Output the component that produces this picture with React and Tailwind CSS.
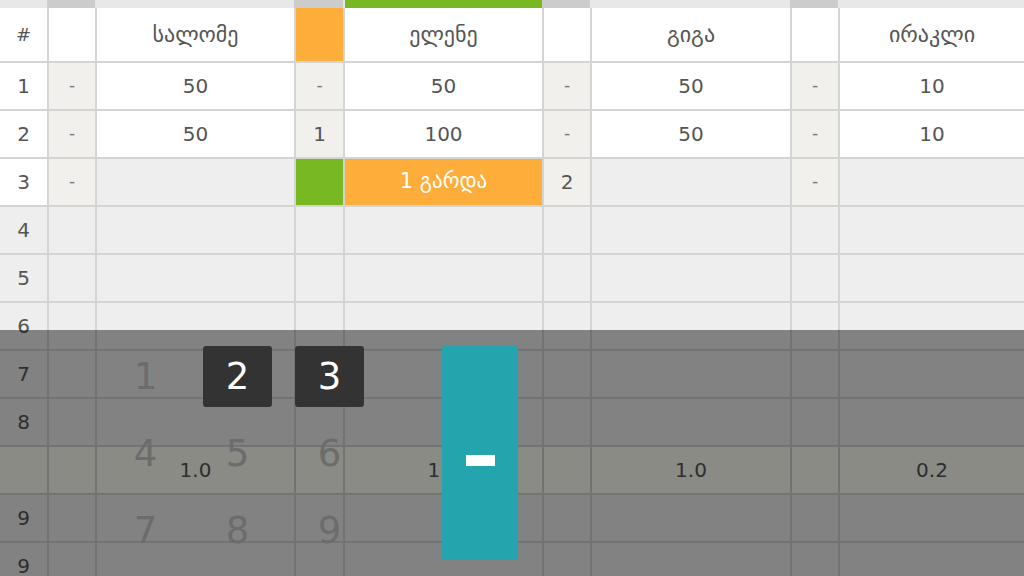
import React from "react";

const COLS = "grid grid-cols-[47px_46px_197px_47px_197px_46px_198px_46px_184px] gap-x-[2px]";

const WHITE = "bg-white";
const BEIGE = "bg-[#f2f0ec]";
const GREY = "bg-[#eeeeee]";
const SUM = "bg-[#fcfff2]";

// Cell: [text, background, extra text class]
const players = ["სალომე", "ელენე", "გიგა", "ირაკლი"];

const rows = [
  [
    ["1", WHITE], ["-", BEIGE, "dash"], ["50", WHITE], ["-", BEIGE, "dash"], ["50", WHITE],
    ["-", BEIGE, "dash"], ["50", WHITE], ["-", BEIGE, "dash"], ["10", WHITE],
  ],
  [
    ["2", WHITE], ["-", BEIGE, "dash"], ["50", WHITE], ["1", BEIGE], ["100", WHITE],
    ["-", BEIGE, "dash"], ["50", WHITE], ["-", BEIGE, "dash"], ["10", WHITE],
  ],
  [
    ["3", WHITE], ["-", BEIGE, "dash"], ["", GREY], ["", "bg-[#78b823]"], ["1 გარდა", "bg-[#fdad3a]", "text-white text-[21px]"],
    ["2", BEIGE], ["", GREY], ["-", BEIGE, "dash"], ["", GREY],
  ],
  ...["4", "5", "6", "7", "8"].map((n) => [[n, GREY], ...Array(8).fill(["", GREY])]),
  [
    ["", SUM], ["", SUM], ["1.0", SUM, "text-[19px]"], ["", SUM], ["1.0", SUM, "text-[19px]"],
    ["", SUM], ["1.0", SUM, "text-[19px]"], ["", SUM], ["0.2", SUM, "text-[19px]"],
  ],
  ...["9", "9"].map((n) => [[n, GREY], ...Array(8).fill(["", GREY])]),
];

const Cell = ({ text, bg, extra }) => (
  <div
    className={`h-[46px] flex items-center justify-center ${bg} ${
      extra === "dash" ? "text-[17px] text-[#777]" : `text-[20px] text-[#555] ${extra || ""}`
    }`}
  >
    {text}
  </div>
);

const keys = ["1", "2", "3", "4", "5", "6", "7", "8", "9"];
const active = ["2", "3"];

const Name = ({ children }) => (
  <div className="bg-white flex items-center justify-center text-[22px] text-[#555]">{children}</div>
);

export default function App() {
  return (
    <div
      className="relative w-[1024px] h-[576px] overflow-hidden bg-[#eeeeee]"
      style={{ fontFamily: '"DejaVu Sans", "Noto Sans", sans-serif' }}
    >
      {/* top strip over columns */}
      <div className={`${COLS} h-[8px] bg-[#e8e8e8]`}>
        <div />
        <div className="bg-[#cccccc] -ml-[2px]" />
        <div />
        <div className="bg-[#cccccc] -ml-[2px]" />
        <div className="bg-[#78b823]" />
        <div className="bg-[#cccccc] -ml-[2px]" />
        <div />
        <div className="bg-[#cccccc] -ml-[2px]" />
        <div />
      </div>

      <div className={`${COLS} gap-y-[2px] bg-[#d4d4d4]`}>
        {/* header */}
        <div className="h-[53px] bg-white flex items-center justify-center text-[18px] text-[#555]">#</div>
        <div className="bg-white" />
        <Name>{players[0]}</Name>
        <div className="bg-[#fdad3a]" />
        <Name>{players[1]}</Name>
        <div className="bg-white" />
        <Name>{players[2]}</Name>
        <div className="bg-white" />
        <Name>{players[3]}</Name>

        {rows.map((r, i) =>
          r.map(([t, bg, extra], j) => <Cell key={`${i}-${j}`} text={t} bg={bg} extra={extra} />)
        )}
      </div>

      {/* numpad overlay */}
      <div className="absolute left-0 right-0 top-[330px] bottom-0 bg-black/[0.455]">
        <div className="flex pl-[111px] pt-[16px]">
          <div className="grid grid-cols-[69px_69px_69px] gap-x-[23px] gap-y-[16px]">
            {keys.map((k) => (
              <div
                key={k}
                className={`h-[61px] rounded-[3px] flex items-center justify-center text-[37px] ${
                  active.includes(k) ? "bg-[#333333] text-white" : "text-[#6c6c6c]"
                }`}
              >
                {k}
              </div>
            ))}
          </div>
          <div className="ml-[78px] w-[76px] h-[214px] rounded-[2px] bg-[#24a4ac] flex items-center justify-center">
            <div className="w-[29px] h-[11px] bg-white mt-[15px]" />
          </div>
        </div>
      </div>
    </div>
  );
}
